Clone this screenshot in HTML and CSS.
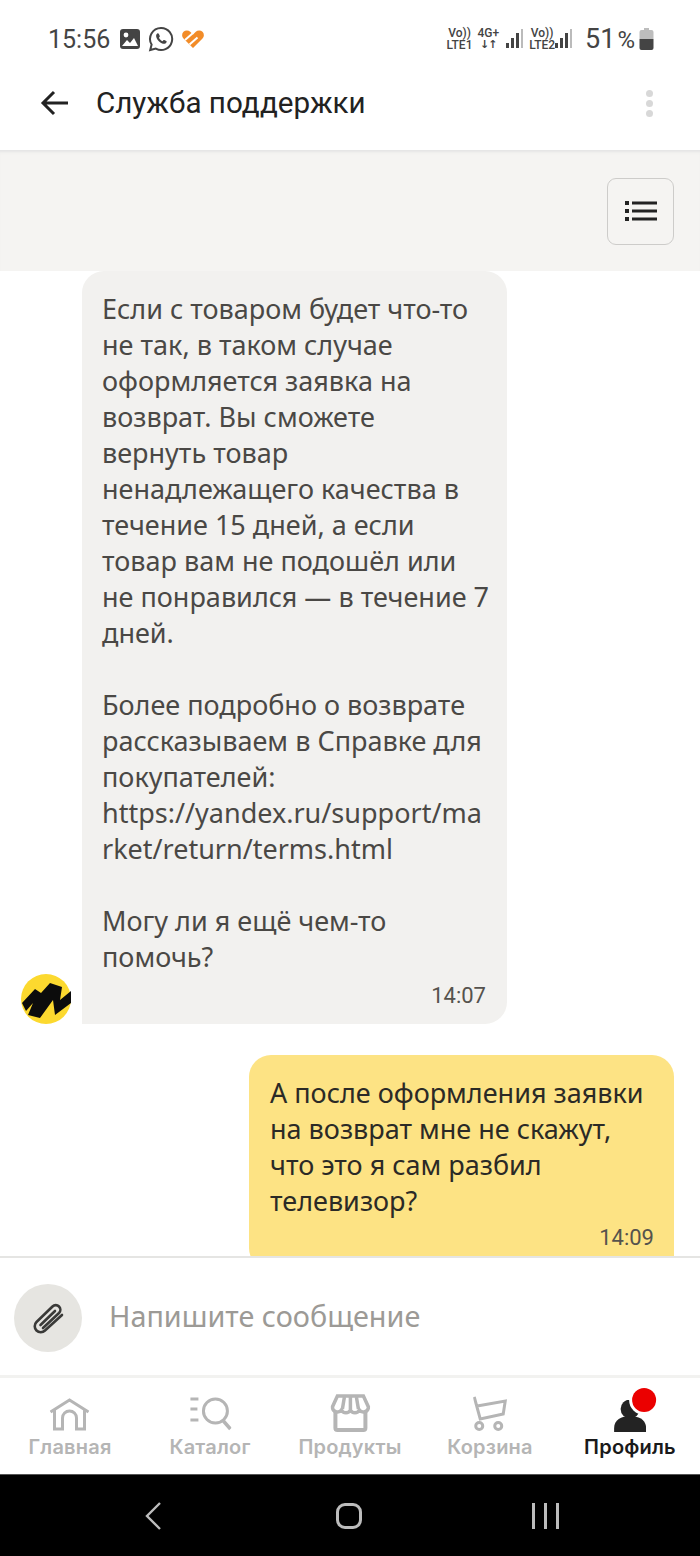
FILE: index.html
```html
<!DOCTYPE html>
<html lang="ru">
<head>
  <meta charset="UTF-8">
  <title>Служба поддержки</title>
  <link rel="stylesheet" href="styles.css">
</head>
<body>
  <div class="statusbar">
    <div class="status-left">
      <span class="clock">15:56</span>
      <svg class="ic-gallery" width="22" height="22" viewBox="0 0 22 22"><rect x="1" y="1" width="20" height="20" rx="3" fill="#444"/><circle cx="7" cy="7" r="2.4" fill="#fff"/><path d="M3 18l5-6 3 3 4-5 4 8z" fill="#fff"/></svg>
      <svg class="ic-whatsapp" width="26" height="26" viewBox="0 0 26 26"><path d="M13 2a11 11 0 0 0-9.4 16.6L2.2 24l5.6-1.4A11 11 0 1 0 13 2z" fill="none" stroke="#444" stroke-width="2"/><path d="M9.300 7.500c-1.300.8-1.500 2.600-.7 4.500 1 2.400 3.100 4.500 5.500 5.400 1.900.7 3.600.5 4.300-.8.400-.7.300-1.200-.1-1.500l-2-1c-.5-.2-.8-.1-1.100.3l-.6.8c-1.500-.6-3-2-3.700-3.500l.7-.8c.3-.3.300-.7.100-1.100l-.9-2c-.3-.5-1.200-.7-1.500-.3z" fill="#444"/></svg>
      <svg class="ic-heart" width="24" height="20" viewBox="0 0 24 20"><path d="M12 19L2.500 9.500a4.700 4.700 0 0 1 0-6.700 4.700 4.700 0 0 1 6.700 0L12 5.500l2.800-2.700a4.700 4.700 0 0 1 6.700 6.700z" fill="#f28c28"/><path d="M4 11l8-7M8.500 15.500l8-7" stroke="#fff" stroke-width="2"/></svg>
    </div>
    <div class="status-right">
      <div class="net"><span>Vo))</span><span>LTE1</span></div>
      <div class="net net-4g"><span>4G+</span><span class="arrows">↓↑</span></div>
      <svg class="bars" width="18" height="20" viewBox="0 0 18 20"><rect x="0" y="14" width="3" height="5" fill="#444"/><rect x="5" y="9" width="3" height="10" fill="#444"/><rect x="10" y="4" width="3" height="15" fill="#444"/><rect x="15" y="0" width="2" height="19" fill="#bbb"/></svg>
      <div class="net"><span>Vo))</span><span>LTE2</span></div>
      <svg class="bars" width="18" height="20" viewBox="0 0 18 20"><rect x="0" y="14" width="3" height="5" fill="#444"/><rect x="5" y="9" width="3" height="10" fill="#444"/><rect x="10" y="4" width="3" height="15" fill="#444"/><rect x="15" y="0" width="2" height="19" fill="#bbb"/></svg>
      <span class="battery-text">51<span class="pct">%</span></span>
      <svg width="15" height="22" viewBox="0 0 15 22"><path d="M5 0h5v2h2.500A2 2 0 0 1 14.500 4v7H.5V4a2 2 0 0 1 2-2H5z" fill="#bdbdbd"/><path d="M.5 11h14v9a2 2 0 0 1-2 2h-10a2 2 0 0 1-2-2z" fill="#444"/></svg>
    </div>
  </div>

  <header class="topbar">
    <svg class="back" width="30" height="26" viewBox="0 0 30 26"><path d="M28 13H3M14 2L3 13l11 11" fill="none" stroke="#222" stroke-width="3"/></svg>
    <h1>Служба поддержки</h1>
    <div class="dots"><i></i><i></i><i></i></div>
  </header>

  <div class="panel">
    <button class="menu-btn">
      <svg width="32" height="22" viewBox="0 0 32 22"><path d="M0 1h4v4H0zM0 9h4v4H0zM0 17h4v4H0z" fill="#222"/><path d="M7 1.500h25v3H7zM7 9.500h25v3H7zM7 17.500h25v3H7z" fill="#222"/></svg>
    </button>
  </div>

  <main class="chat">
    <div class="row-in">
      <svg class="avatar" width="50" height="50" viewBox="0 0 50 50"><circle cx="25" cy="25" r="25" fill="#fcd92f"/><path d="M1 29L14 15l6 4 9-10 12 4-2 13 11-9v12L34 41l-2-15-13 18-12-3 5-12-7 8z" fill="#0c0c0c"/></svg>
      <div class="bubble bubble-in">
        <p>Если с товаром будет что-то<br>не так, в таком случае<br>оформляется заявка на<br>возврат. Вы сможете<br>вернуть товар<br>ненадлежащего качества в<br>течение 15 дней, а если<br>товар вам не подошёл или<br>не понравился — в течение 7<br>дней.<br><br>Более подробно о возврате<br>рассказываем в Справке для<br>покупателей:<br>https://yandex.ru/support/ma<br>rket/return/terms.html<br><br>Могу ли я ещё чем-то<br>помочь?</p>
        <time>14:07</time>
      </div>
    </div>
    <div class="row-out">
      <div class="bubble bubble-out">
        <p>А после оформления заявки<br>на возврат мне не скажут,<br>что это я сам разбил<br>телевизор?</p>
        <time>14:09</time>
      </div>
    </div>
  </main>

  <div class="composer">
    <div class="attach">
      <svg width="40" height="40" viewBox="0 0 40 40"><path d="M15 30L31 15a4.500 4.500 0 0 0-6.500-6.500L8.500 24a6 6 0 0 0 8.500 8.500L34 17M12.500 27L27 13" fill="none" stroke="#3a3a38" stroke-width="2.600" stroke-linecap="round"/></svg>
    </div>
    <span class="placeholder">Напишите сообщение</span>
  </div>

  <nav class="tabs">
    <div class="tab tab-home">
      <svg width="40" height="34" viewBox="0 0 40 34"><path d="M1 14L20 2l19 12M5 12v19h8V20a7 7 0 0 1 14 0v11h8V12" fill="none" stroke="#b5b5b5" stroke-width="3"/></svg>
      <span>Главная</span>
    </div>
    <div class="tab tab-catalog">
      <svg width="42" height="36" viewBox="0 0 42 36"><path d="M1 3h8M1 13h7M1 24h8" stroke="#b5b5b5" stroke-width="3"/><circle cx="26" cy="15" r="12" fill="none" stroke="#b5b5b5" stroke-width="3"/><path d="M34 25l7 8" stroke="#b5b5b5" stroke-width="3.500"/></svg>
      <span>Каталог</span>
    </div>
    <div class="tab tab-food">
      <svg width="40" height="38" viewBox="0 0 40 38"><path d="M5 18v16a2 2 0 0 0 2 2h26a2 2 0 0 0 2-2V18" fill="none" stroke="#b5b5b5" stroke-width="4"/><path d="M7 2h26l5 11a5 5 0 0 1-9 3 5 5 0 0 1-9 0 5 5 0 0 1-9 0 5 5 0 0 1-9-3z" fill="none" stroke="#b5b5b5" stroke-width="3.500"/><path d="M14 3l-2 12M20 3v12M26 3l2 12" stroke="#b5b5b5" stroke-width="3.500"/></svg>
      <span>Продукты</span>
    </div>
    <div class="tab tab-cart">
      <svg width="34" height="36" viewBox="0 0 34 36"><path d="M1 1l6 22 23-5 2-13-28 5" fill="none" stroke="#b5b5b5" stroke-width="3"/><circle cx="6" cy="30" r="3.500" fill="none" stroke="#b5b5b5" stroke-width="3"/><circle cx="25" cy="30" r="3.500" fill="none" stroke="#b5b5b5" stroke-width="3"/></svg>
      <span>Корзина</span>
    </div>
    <div class="tab tab-profile">
      <svg width="32" height="32" viewBox="0 0 32 32"><circle cx="16" cy="9" r="9.500" fill="#232323"/><path d="M0 32v-4c0-8 7-12 16-12s16 4 16 12v4z" fill="#232323"/></svg>
      <b class="badge"></b>
      <span>Профиль</span>
    </div>
  </nav>

  <div class="navbar">
    <svg width="18" height="30" viewBox="0 0 18 30"><path d="M16 2L3 15l13 13" fill="none" stroke="#bcbcbc" stroke-width="2.400"/></svg>
    <div class="nav-home"></div>
    <div class="nav-recent"><i></i><i></i><i></i></div>
  </div>
</body>
</html>
```

FILE: styles.css
```css
* {
  box-sizing: border-box;
}
html, body {
  margin: 0;
  padding: 0;
}
body {
  width: 700px;
  height: 1556px;
  display: flex;
  flex-direction: column;
  overflow: hidden;
  background: #fff;
  font-family: 'Noto Sans', sans-serif;
}
.statusbar {
  height: 68px;
  flex: none;
  display: flex;
  align-items: center;
  justify-content: space-between;
  padding: 10px 46px 0 48px;
  color: #444;
}
.status-left, .status-right {
  display: flex;
  align-items: center;
}
.clock {
  font-family: Roboto, sans-serif;
  font-size: 25px;
  margin-right: 9px;
}
.ic-whatsapp {
  margin-left: 7px;
}
.ic-heart {
  margin-left: 7px;
}
.net {
  display: flex;
  flex-direction: column;
  align-items: center;
  font-family: Roboto, sans-serif;
  font-size: 12px;
  line-height: 12px;
  font-weight: 500;
}
.net-4g {
  margin-left: 5px;
  margin-right: 7px;
}
.arrows {
  font-family: 'DejaVu Sans', sans-serif;
  font-size: 11px;
  font-weight: 700;
  letter-spacing: -1px;
}
.bars {
  margin-right: 5px;
}
.battery-text {
  font-family: Roboto, sans-serif;
  font-size: 27px;
  margin-left: 7px;
  margin-right: 4px;
}
.pct {
  font-size: 24px;
  margin-left: 2px;
}
.topbar {
  height: 82px;
  flex: none;
  display: flex;
  align-items: center;
  padding: 0 47px 12px 40px;
}
.topbar h1 {
  margin: 0 0 0 26px;
  font-family: Roboto, sans-serif;
  font-size: 29.600px;
  font-weight: 400;
  color: #222;
  flex: 1;
}
.dots {
  display: flex;
  flex-direction: column;
  gap: 3px;
}
.dots i {
  width: 7px;
  height: 7px;
  border-radius: 50%;
  background: #d8d8d8;
}
.panel {
  height: 121px;
  flex: none;
  display: flex;
  align-items: center;
  justify-content: flex-end;
  padding-right: 26px;
  background: #f5f4f2;
  border-top: 1px solid #e6e6e6;
  box-shadow: inset 0 3px 3px -2px #e4e4e4;
}
.menu-btn {
  width: 67px;
  height: 67px;
  padding: 0;
  display: flex;
  align-items: center;
  justify-content: center;
  background: transparent;
  border: 1.500px solid #cdccca;
  border-radius: 9px;
}
.chat {
  height: 985px;
  flex: none;
  overflow: hidden;
  padding-right: 26px;
}
.row-in {
  display: flex;
  align-items: flex-end;
  padding-left: 21px;
}
.avatar {
  flex: none;
  margin-right: 11px;
}
.bubble {
  font-size: 27px;
  line-height: 36px;
  white-space: nowrap;
}
.bubble p {
  margin: 0;
}
.bubble time {
  display: block;
  text-align: right;
  font-family: Roboto, sans-serif;
  font-size: 22px;
  line-height: 24px;
  color: #55524d;
}
.bubble-in {
  width: 425px;
  padding: 20px 21px 16px 20px;
  background: #f2f1ef;
  color: #4a4845;
  border-radius: 22px 22px 22px 0;
}
.bubble-in time {
  margin-top: 9px;
}
.row-out {
  display: flex;
  justify-content: flex-end;
  margin-top: 31px;
}
.bubble-out {
  width: 425px;
  padding: 20px 20px 20px 21px;
  background: #fde384;
  color: #2b2a26;
  border-radius: 22px 22px 0 22px;
}
.bubble-out time {
  margin-top: 7px;
}
.composer {
  height: 122px;
  flex: none;
  display: flex;
  align-items: center;
  padding: 2px 0 0 14px;
  border-top: 2px solid #e5e5e3;
  border-bottom: 3px solid #f2f2f0;
}
.attach {
  width: 68px;
  height: 68px;
  border-radius: 50%;
  background: #e6e5e1;
  display: flex;
  align-items: center;
  justify-content: center;
}
.placeholder {
  margin: 0 0 4px 27px;
  font-size: 28.800px;
  color: #9c9a96;
}
.tabs {
  height: 96px;
  flex: none;
  display: flex;
  position: relative;
  font-family: Inter, sans-serif;
  font-weight: 600;
  font-size: 20px;
  letter-spacing: .2px;
  color: #b5b5b5;
}
.tab {
  position: absolute;
  top: 0;
  height: 96px;
  display: flex;
  flex-direction: column;
  align-items: center;
  justify-content: flex-end;
  padding-bottom: 15px;
  transform: translateX(-50%);
  white-space: nowrap;
}
.tab svg {
  margin-bottom: 3px;
}
.tab-home { left: 70px; }
.tab-catalog { left: 210px; }
.tab-food { left: 350px; }
.tab-cart { left: 490px; }
.tab-profile {
  left: 630px;
  color: #1a1a1a;
}
.badge {
  position: absolute;
  top: 10px;
  right: 20px;
  width: 24px;
  height: 24px;
  border-radius: 50%;
  background: #eb0000;
  box-shadow: 0 0 0 3px #fff;
}
.navbar {
  height: 82px;
  flex: none;
  display: flex;
  align-items: center;
  background: #000;
  border-top: 1px solid #555;
}
.navbar svg {
  margin-left: 144px;
}
.nav-home {
  width: 26px;
  height: 26px;
  margin-left: 174px;
  border: 3px solid #bcbcbc;
  border-radius: 9px;
}
.nav-recent {
  display: flex;
  gap: 9px;
  margin-left: 170px;
}
.nav-recent i {
  width: 3px;
  height: 26px;
  background: #bcbcbc;
}
```
